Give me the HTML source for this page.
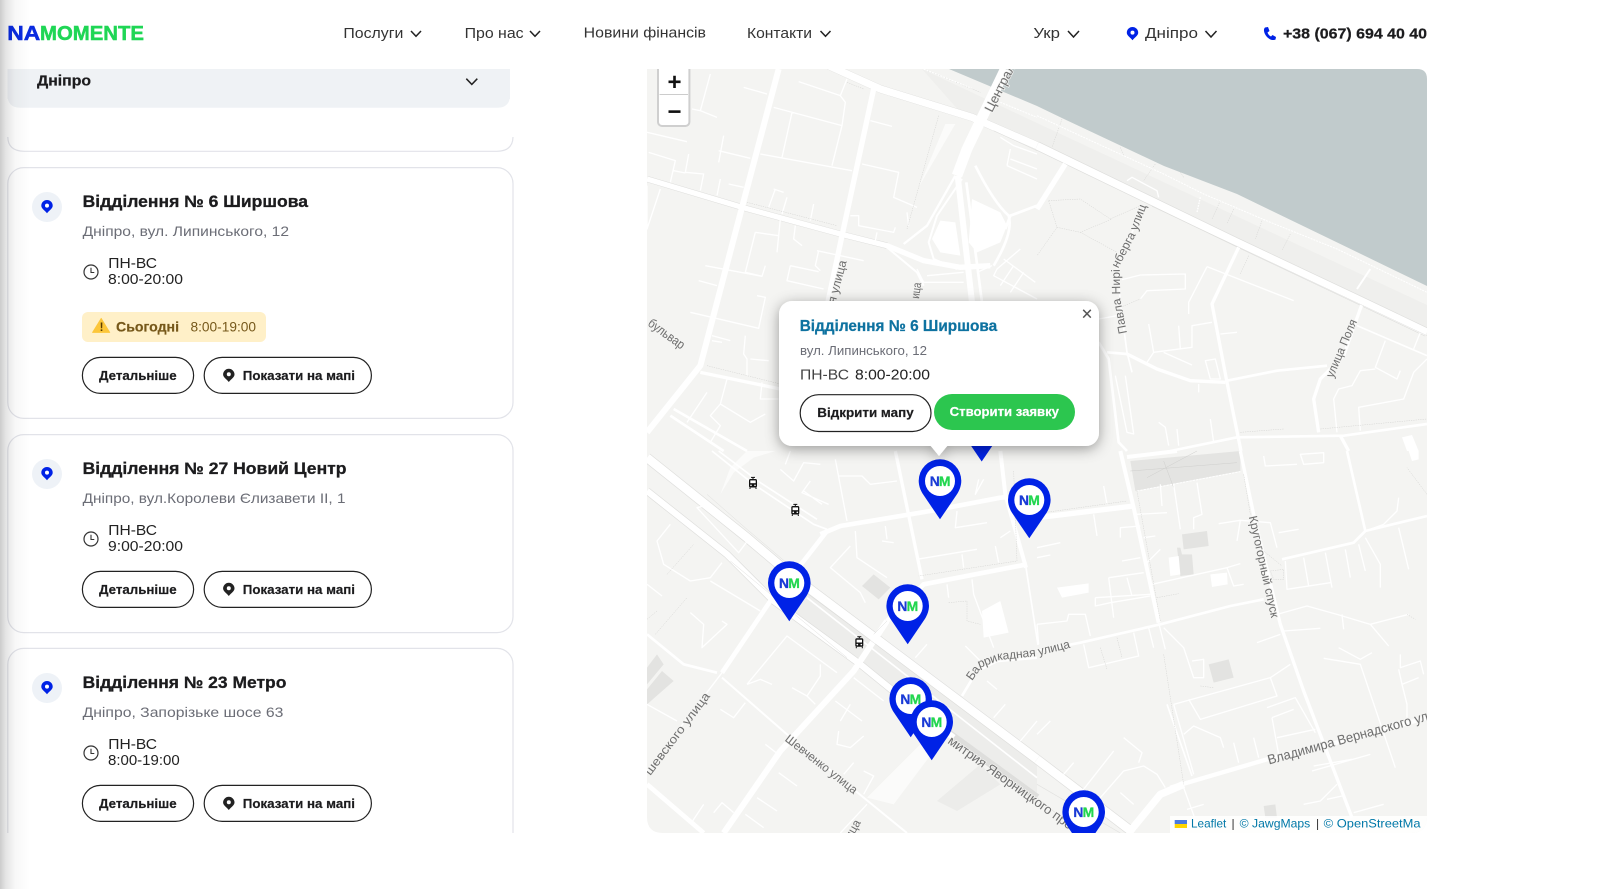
<!DOCTYPE html>
<html lang="uk"><head><meta charset="utf-8"><title>Namomente</title>
<style>
html,body{margin:0;padding:0;background:#fff;width:1610px;height:889px;overflow:hidden}
svg{display:block}
text{font-family:"Liberation Sans",sans-serif}
.r{fill:none;stroke:#fff;stroke-linejoin:round;stroke-linecap:butt}
.m{fill:none;stroke:#fff;stroke-width:4;stroke-linejoin:round}
.c{fill:none;stroke:#dededc;stroke-linejoin:round}
.d{fill:none;stroke:#d2d2d0;stroke-width:1.5;stroke-dasharray:4 3}
.g{fill:none;stroke:#dcdcda;stroke-width:2}
.l{font-size:12px;fill:#6e6e6e;stroke:#f4f4f2;stroke-width:1.5px;paint-order:stroke}
.n{font-size:15px;fill:#333}
.b{font-weight:bold;fill:#1c1c1e;stroke:#1c1c1e;stroke-width:.25px}
.h{font-size:16.5px;font-weight:bold;fill:#1c1c1e;stroke:#1c1c1e;stroke-width:.3px}
.a{font-size:14px;fill:#6b6d76}
.w{font-size:14.5px;fill:#222}
.k{font-size:13px;font-weight:bold;fill:#1c1c1e;stroke:#1c1c1e;stroke-width:.2px}
.at{font-size:12px;fill:#0078a8}
.nn{font-size:14px;font-weight:bold;fill:#1a3bd6;stroke:#1a3bd6;stroke-width:.3px}
.nm{font-size:14px;font-weight:bold;fill:#22d64f;stroke:#22d64f;stroke-width:.3px}
</style></head><body>
<svg xmlns="http://www.w3.org/2000/svg" width="1610" height="889" viewBox="0 0 1610 889">
<defs>
<clipPath id="mc"><path d="M647 69H1417Q1427 69 1427 79V817Q1427 833 1411 833H663Q647 833 647 817Z"/></clipPath>
<clipPath id="cc"><rect x="0" y="69" width="640" height="764"/></clipPath>
<clipPath id="ac"><rect x="1170" y="810" width="251" height="25"/></clipPath>
<filter id="ps" x="-20%" y="-20%" width="140%" height="150%"><feDropShadow dx="0" dy="3" stdDeviation="7" flood-color="#000" flood-opacity=".38"/></filter>
<linearGradient id="sh" x1="0" x2="1" y1="0" y2="0"><stop offset="0" stop-color="#000" stop-opacity=".2"/><stop offset=".2" stop-color="#000" stop-opacity=".1"/><stop offset=".5" stop-color="#000" stop-opacity=".03"/><stop offset="1" stop-color="#000" stop-opacity="0"/></linearGradient>
<path id="pin" d="M0 13.2C-2.5 10-5.7 8.5-5.7 5.7A5.7 5.7 0 0 1 5.7 5.7C5.7 8.5 2.5 10 0 13.2Z"/>
<path id="mk" d="M21.3 60L4 34.5C1.5 30.5 0 26 0 21.5A21.3 21.5 0 0 1 42.6 21.5C42.6 26 41 30.5 38.6 34.5Z"/>
<g id="tram"><rect x="-4" y="-4" width="8" height="8.5" rx="1.6" fill="#111"/><rect x="-2.7" y="-2.6" width="5.4" height="2.8" fill="#fff"/><circle cx="-2" cy="2.3" r=".8" fill="#fff"/><circle cx="2" cy="2.3" r=".8" fill="#fff"/><path d="M-2-5.6H2M0-5.6V-4M-3 4.5V6M3 4.5V6" stroke="#111" stroke-width="1" fill="none"/></g>
</defs>
<rect width="1610" height="889" fill="#fff"/>

<!-- MAP -->
<g clip-path="url(#mc)">
<rect x="647" y="69" width="780" height="764" fill="#f4f4f2"/>
<path d="M922 69L1037 123L1427 305V330L1037 150L960 112Z" fill="#efefed"/>
<polygon points="949,69 1037,106 1064,119 1164,166 1237,194 1330,239 1427,286 1427,69" fill="#c1cbcc"/>

<!-- TOP LEFT -->
<g transform="translate(647 69) scale(.33333)">
<path class="c" stroke-width="24" d="M545-10L700 60L975 145L1170 230"/>
<path class="c" stroke-width="19" d="M0 330L285 415L580 495L720 530"/>
<path class="r" stroke-width="22" d="M545-10L700 60L975 145L1170 230"/>
<path class="r" stroke-width="18" d="M395 0L285 415L160 890L0 1090"/>
<path class="r" stroke-width="16" d="M0 330L285 415L580 495L720 530L830 575L940 595L1030 590"/>
<path class="r" stroke-width="16" d="M680 60L585 500L530 760"/>
<path class="r" stroke-width="32" d="M1075 0L960 240L930 320"/>
<path class="r" stroke-width="18" d="M932 320L975 700"/>
<path class="r" stroke-width="8" d="M958 340L1005 700"/>
<path class="r" stroke-width="7" d="M925 320L840 470L770 525"/>
<path class="r" stroke-width="6" d="M945 330L870 440L845 520L860 570L930 600"/>
<path class="r" stroke-width="8" d="M985 290Q1040 400 1085 440Q1100 490 1040 590"/>
<path class="r" stroke-width="8" d="M1170 410L1090 440L1075 480"/>
<path class="r" stroke-width="6" d="M720 535L810 610L830 650"/>
<path fill="#fff" d="M975 390L1060 430L1080 470L1060 520L990 550L965 520ZM880 455L925 460L940 560L880 550L855 510Z"/>
<polygon fill="#fbfbfa" points="895,165 925,165 835,320 815,355"/>
<path class="r" stroke-width="10" d="M160 910L400 960"/>
<path class="r" stroke-width="8" d="M70 1040L230 1146M80 1020L300 1146"/>
<path class="m" d="M190 15L160 125L210 145M135 120L160 125M0 190L120 218M5 250L85 275L70 340M125 255L115 310L170 315L160 365M80 305L115 312M230 200L215 280M215 245L310 268M220 330L210 380M245 345L290 355M290 55L360 75M380 115L585 170L555 290M435 130L405 265M340 255L615 305M455 38L580 80L595 100L585 170M600 30L580 80M670 155L735 172M645 285L755 310L740 385L810 415M380 360L410 370M385 360L365 415M420 385L405 435M400 450L390 550M325 490L395 500M325 490L295 610L345 622L355 590M175 590L345 622M500 405L490 455M445 470L440 510L465 530M155 635L210 650M330 680L355 685L335 778L130 730M510 545L650 575M515 545L505 590L520 605M430 590L420 635L530 660M430 590L515 608M195 800L250 815M195 815L225 820M295 800L290 855L300 870L300 920M310 870L365 875M345 940L340 990L395 990M240 930L220 1005L190 1040L220 1070L190 1120M220 1005L310 1060L355 1035M180 970L120 1060M610 440L635 440L635 470L740 490L745 475M690 490L685 515M780 430L785 470M1060 205L1100 230L1170 255M1090 240L1080 290M1090 270L1170 300M1170 330L1080 290M1120 540L1050 600L1040 620L1170 690M1070 570L1165 640M1100 590L1060 650M1130 610L1090 670M840 620L950 610M810 600L830 640L950 640M990 610L1035 590M0 350L0 480L40 360"/>
<path class="d" d="M875 140L780 480M180 890L400 945M300 400L570 470M830 0L1000 70M600 40L650 60"/>
<path d="M1040 185L1170 245" stroke="#dededc" stroke-width="1.5" fill="none"/>
<path d="M830 0L975 58M1060 100L1170 145" stroke="#fff" stroke-width="3" stroke-dasharray="6 3" fill="none"/>
</g>

<!-- TOP RIGHT -->
<g transform="translate(1037 69) scale(.33333)">
<path class="c" stroke-width="27" d="M0 230L600 520L960 690L1170 790"/>
<path class="r" stroke-width="23" d="M0 230L600 520L960 690L1170 790"/>
<path class="r" stroke-width="16" d="M85 285L0 420"/>
<path class="r" stroke-width="10" d="M605 535L525 705L570 940L612 1146"/>
<path class="r" stroke-width="10" d="M975 705L920 860L850 930L830 990L845 1090"/>
<path class="r" stroke-width="5" d="M325 410L280 500L240 580L250 700L270 850L285 910"/>
<path class="r" stroke-width="10" d="M270 855L360 900L460 935L565 940"/>
<path class="r" stroke-width="8" d="M570 935L720 905L870 890"/>
<path class="r" stroke-width="8" d="M210 850L270 855"/>
<path class="r" stroke-width="8" d="M185 820L215 870L245 1120L270 1146"/>
<path class="r" stroke-width="8" d="M400 1146L600 1105L920 1100L1170 1065"/>
<path class="r" stroke-width="10" d="M910 1100L935 1146"/>
<path class="r" stroke-width="6" d="M1000 600L960 660"/>
<path class="r" stroke-width="5" d="M960 770L1170 860"/>
<path class="m" d="M255 632L310 618L445 615L445 660L330 665L310 690M510 593L455 700L455 735M510 593L770 695M550 795L600 790M525 760L465 770L465 835L350 850L330 880M335 765L350 850M425 770L430 840M380 850L465 888M505 875L520 930L550 930L535 870ZM1045 815L1015 895L1080 930L1090 905M1015 900L970 905L945 950L905 960L890 990L900 1090M1170 870L1130 910L1100 990L965 1015L970 1085M1150 790L1130 840M365 1060L385 1075L395 1130M420 1080L425 1130M520 1050L530 1120M485 945L485 970M270 335L285 325L360 365L365 385M235 920L270 1090L290 1095L265 920M185 750L240 740"/>
<polygon fill="#fff" points="1095,1105 1125,1098 1145,1146 1110,1146"/>
<path class="d" d="M75 150L45 235M355 285L320 335M550 395L525 450M590 420L570 465M675 455L655 510M760 495L735 545M635 560L610 615M35 395L130 390L220 450L310 410M60 475L0 560M60 475L130 490L225 450M130 490L240 550M35 395L60 475M250 715L310 690M250 235L260 260M430 310L440 325M610 1090L740 1080M850 1080L1170 1050"/>
<path d="M0 140L140 205L380 315L500 375L700 460L900 540L1170 670" stroke="#fff" stroke-width="3" stroke-dasharray="6 3" fill="none"/>
<path d="M490 385L480 430" stroke="#fff" stroke-width="4" stroke-dasharray="5 3" fill="none"/>
<path d="M345 412L1170 800" stroke="#dededc" stroke-width="1.5" fill="none"/>
</g>

<!-- BOTTOM LEFT -->
<g transform="translate(647 451) scale(.33333)">
<path d="M430 370L1170 925L1170 1040L380 450Z" fill="#ededeb"/>
<path fill="#e3e3e1" d="M645 405L680 370L730 410L695 445ZM0 650L30 610L50 640L0 700ZM0 715L45 660L80 690L0 760Z"/>
<path fill="#ececea" d="M870 1050L1000 940L1060 1000L930 1080Z"/>
<path fill="#fbfbfa" d="M220 130L260 65L320 20L385 0L300 0L250 50ZM660 1040L820 880L860 900L740 1060Z"/>
<path fill="#fff" d="M1005 480L1060 450L1085 545L1010 560Z"/>
<path class="c" stroke-width="30" d="M0 20L300 260L430 370L1170 925"/>
<path class="c" stroke-width="23" d="M0 120L240 310L380 450L640 640L800 770L1170 1040"/>
<path class="r" stroke-width="26" d="M0 20L300 260L430 370L1170 925"/>
<path class="r" stroke-width="19" d="M0 120L240 310L380 450L640 640L800 770L920 860"/>
<path class="r" stroke-width="5" d="M480 440L1170 980"/>
<path class="r" stroke-width="14" d="M540 240L470 330L370 450L225 665"/>
<path class="r" stroke-width="18" d="M720 510L660 600L620 660L400 900L230 1146"/>
<path class="r" stroke-width="14" d="M720 510L830 400L1140 340"/>
<path class="r" stroke-width="14" d="M520 250L580 225L850 180L1060 140L1170 130"/>
<path class="r" stroke-width="12" d="M1060 0L1075 130L1137 350"/>
<path class="r" stroke-width="5" d="M1137 350L1173 582"/>
<path class="r" stroke-width="10" d="M745 0L825 385"/>
<path class="r" stroke-width="8" d="M0 550L110 640L210 665"/>
<path class="r" stroke-width="14" d="M0 1000L170 1146"/>
<path class="r" stroke-width="6" d="M225 680L420 850L650 1040L780 1146"/>
<path class="r" stroke-width="8" d="M1170 620L1050 630L990 660L945 735"/>
<path class="r" stroke-width="5" d="M195 0L320 100L500 220L540 235M215 0L340 95L510 205"/>
<path class="m" d="M150 170L170 165L305 265L275 305ZM225 665L0 960M300 700L420 555L570 665M300 700L340 685L375 700M295 755L260 800L220 775M520 640L520 675L480 735L435 710M480 735L505 760M620 680L710 750M565 750L645 810M610 760L580 810M575 840L570 880L610 890L650 855M355 880L400 915M395 965L450 1005M620 935L590 970M650 960L680 975L650 1030M200 1085L225 1055L260 1085M170 1060L130 1120M330 1040L390 1080M295 1090L350 1130M70 220L30 270L50 340L130 390L190 380L225 335M190 390L340 480M130 485L170 520L165 590L240 520L225 510M610 285L550 350L640 425L655 455M625 240L630 320L720 380M715 225L720 265M705 270L740 275M565 25L600 210M575 75L645 75L670 100L750 90M400 55L440 90L470 35L520 40M430 0L415 40M490 90L465 125L545 160M470 120L525 160M930 180L925 230L1020 215M995 85L985 130L1010 85M810 325L990 295M945 310L950 350M1045 285L1055 335M1090 240L1060 260M900 400L905 440M975 385L980 430L1040 590M840 580L805 620M955 585L1000 630M1020 690L1050 715M1075 760L1040 800M1170 810L1120 870M0 400L45 435M660 1060L580 1146M0 760L90 810"/>
<path class="d" d="M905 455L960 450L960 510L1000 520M1100 60L1110 330L815 375M60 370L140 280M25 550L120 440M0 505L30 480"/>
<path d="M180 130L300 235L430 345M250 330L600 620M720 510L680 550M430 390L700 590" stroke="#dededc" stroke-width="1.5" fill="none"/>
</g>

<!-- BOTTOM RIGHT -->
<g transform="translate(1037 451) scale(.33333)">
<path fill="#e4e4e2" d="M280 30L610 0L610 60L295 120Z"/>
<path d="M300 120L610 62" stroke="#fff" stroke-width="3" stroke-dasharray="7 3" fill="none"/>
<path d="M330 80L480 0M380 30L410 110M280 60L600 35" stroke="#cfcfcd" stroke-width="1.5" fill="none"/>
<path fill="#e3e3e1" d="M435 250L510 240L515 285L440 295ZM420 290L430 290L435 310L465 310L470 370L430 375ZM515 640L575 625L590 680L530 695ZM680 1065L715 1060L720 1100L685 1100Z"/>
<path fill="#fff" d="M395 320L425 315L430 370L400 375ZM520 370L570 365L572 400L525 408ZM60 410L155 397L155 425L75 440ZM1115 0L1145 0L1145 25L1125 30Z"/>
<path class="c" stroke-width="30" d="M0 925L290 1146"/>
<path class="r" stroke-width="26" d="M0 925L290 1146"/>
<path class="r" stroke-width="22" d="M275 1146L370 1030L440 1000"/>
<path class="r" stroke-width="13" d="M400 1010L690 925L880 880L1170 800"/>
<path class="r" stroke-width="12" d="M270 18L420 0"/>
<path class="r" stroke-width="16" d="M0 200L290 165"/>
<path class="r" stroke-width="12" d="M250 0L290 170L365 515"/>
<path class="r" stroke-width="10" d="M610 0L650 190L730 520L800 720L945 1100"/>
<path class="r" stroke-width="8" d="M0 600L130 575L370 520L580 465L680 445"/>
<path class="r" stroke-width="8" d="M930 0L985 240"/>
<path class="r" stroke-width="8" d="M735 325L950 275L985 240L1170 195"/>
<path class="r" stroke-width="5" d="M390 760L465 975"/>
<path class="m" d="M365 515L385 595M335 530L350 590M300 190L390 185M250 260L250 230L310 225M320 260L355 255M255 330L310 320M330 335L370 295M345 400L570 350L610 338M570 350L590 405L620 400M215 380L320 365M215 380L230 500M270 380L285 435M175 440L340 430M175 440L175 465L220 455M220 455L340 435M0 520L90 510L95 490L145 490L160 555M140 580L155 650L305 615L290 545M410 760L700 680L720 735L490 805L455 745M380 530L440 590L470 680L500 680L500 625L465 630M700 680L760 640M690 770L775 740L835 845M705 800L770 775M705 800L725 910M720 860L835 835M590 875L605 935M650 860L665 920M440 850L470 825L550 860L560 890M410 760L470 970M440 1010L480 1120M450 1075L500 1060M660 575L730 550M740 540L850 532M545 218L610 208L600 270M610 208L700 215L720 290M725 245L785 235M720 490L810 465L900 490L1000 520L1115 490M1000 520L1055 585M915 490L920 535M905 590L970 625L1005 605M860 622L970 640L1075 950M1090 610L1090 650L1150 630L1160 670M1085 655L1095 700L1145 680M1095 700L1110 760L1110 800M825 960L1000 910M830 945L945 925M800 1060L850 1050L900 1000M950 1085L1040 1060M870 1045L915 1035M1085 140L1080 180L1040 220L985 240M745 330L750 415L880 395M800 320L815 405M865 305L885 410M925 295L940 380M965 280L985 360M985 260L1030 340L1030 410M1085 230L1115 355M0 850L40 810M80 970L110 935M120 1040L230 900M190 1040L260 960L320 945L360 970L385 1010M260 860L315 905L305 935M250 1025L290 1060M680 15L685 45L780 40M790 10L860 5L860 35L800 40ZM370 100L375 165M410 100L430 235M480 95L495 190L470 200L470 235M0 290L70 275M0 320L40 312M200 105L210 160M170 190L180 255M0 520L5 580"/>
<path class="d" d="M620 70L640 190M680 300L735 345M700 360L740 355L740 385L710 385ZM190 590L210 655M240 560L255 620M490 705L530 710M360 440L425 428M1110 490L1135 505M300 120L370 510M20 185L270 150M380 610L440 1000M1170 130L1110 50"/>
<path d="M0 1000L250 1146M0 1040L130 1146" stroke="#e2e2e0" stroke-width="2" fill="none"/>
</g>

<!-- TRAMS -->
<use href="#tram" transform="translate(753 483)"/>
<use href="#tram" transform="translate(795.3 510)"/>
<use href="#tram" transform="translate(859.3 642.3)"/>

<!-- MAP LABELS -->
<text class="l" transform="translate(992 113) rotate(-63)" style="font-size:13px">Центральная</text>
<text class="l" transform="translate(647 325) rotate(36)" style="font-size:13px" textLength="42" lengthAdjust="spacingAndGlyphs">бульвар</text>
<text class="l" transform="translate(835.3 304) rotate(-75)" textLength="44" lengthAdjust="spacingAndGlyphs">я улица</text>
<text class="l" transform="translate(919 299) rotate(-82)" textLength="16" lengthAdjust="spacingAndGlyphs">ица</text>
<path id="pp" d="M1127 333L1120.3 299L1119.7 265.7L1135.3 235.7L1146.3 206.3" fill="none"/>
<text class="l" letter-spacing=".15"><textPath href="#pp">Павла Нирінберга улица</textPath></text>
<text class="l" transform="translate(1333 378.5) rotate(-67)" textLength="62" lengthAdjust="spacingAndGlyphs">улица Поля</text>
<text class="l" transform="translate(1248.7 516.7) rotate(77.5)" textLength="104" lengthAdjust="spacingAndGlyphs">Кругогорный спуск</text>
<path id="pb" d="M972 681L982 667L1000 660L1037 656L1069 648" fill="none"/>
<text class="l" letter-spacing="-.1"><textPath href="#pb">Баррикадная улица</textPath></text>
<text class="l" transform="translate(1269 764.5) rotate(-15.5)" style="font-size:13.5px" textLength="166" lengthAdjust="spacingAndGlyphs">Владимира Вернадского ул</text>
<text class="l" transform="translate(784.3 740.3) rotate(38)" textLength="88" lengthAdjust="spacingAndGlyphs">Шевченко улица</text>
<text class="l" transform="translate(650.3 776) rotate(-53)" textLength="100" lengthAdjust="spacingAndGlyphs">шевского улица</text>
<text class="l" transform="translate(947 742.7) rotate(35.5)" style="font-size:13px" textLength="150" lengthAdjust="spacingAndGlyphs">митрия Яворницкого про</text>
<text class="l" transform="translate(851 840) rotate(-60)">ица</text>

<!-- MARKERS -->
<g transform="translate(960.4 401.5)"><use href="#mk" fill="#0022e6"/></g>
<g transform="translate(918.7 459.3)"><use href="#mk" fill="#0022e6"/><circle cx="21.3" cy="21.7" r="15" fill="#fff"/><text class="nn" x="11" y="26.7" textLength="10" lengthAdjust="spacingAndGlyphs">N</text><text class="nm" x="20.2" y="26.7" textLength="11.6" lengthAdjust="spacingAndGlyphs">M</text></g>
<g transform="translate(1008 478.3)"><use href="#mk" fill="#0022e6"/><circle cx="21.3" cy="21.7" r="15" fill="#fff"/><text class="nn" x="11" y="26.7" textLength="10" lengthAdjust="spacingAndGlyphs">N</text><text class="nm" x="20.2" y="26.7" textLength="11.6" lengthAdjust="spacingAndGlyphs">M</text></g>
<g transform="translate(768 561.3)"><use href="#mk" fill="#0022e6"/><circle cx="21.3" cy="21.7" r="15" fill="#fff"/><text class="nn" x="11" y="26.7" textLength="10" lengthAdjust="spacingAndGlyphs">N</text><text class="nm" x="20.2" y="26.7" textLength="11.6" lengthAdjust="spacingAndGlyphs">M</text></g>
<g transform="translate(886.4 584.3)"><use href="#mk" fill="#0022e6"/><circle cx="21.3" cy="21.7" r="15" fill="#fff"/><text class="nn" x="11" y="26.7" textLength="10" lengthAdjust="spacingAndGlyphs">N</text><text class="nm" x="20.2" y="26.7" textLength="11.6" lengthAdjust="spacingAndGlyphs">M</text></g>
<g transform="translate(889.4 677.3)"><use href="#mk" fill="#0022e6"/><circle cx="21.3" cy="21.7" r="15" fill="#fff"/><text class="nn" x="11" y="26.7" textLength="10" lengthAdjust="spacingAndGlyphs">N</text><text class="nm" x="20.2" y="26.7" textLength="11.6" lengthAdjust="spacingAndGlyphs">M</text></g>
<g transform="translate(910.4 700.3)"><use href="#mk" fill="#0022e6"/><circle cx="21.3" cy="21.7" r="15" fill="#fff"/><text class="nn" x="11" y="26.7" textLength="10" lengthAdjust="spacingAndGlyphs">N</text><text class="nm" x="20.2" y="26.7" textLength="11.6" lengthAdjust="spacingAndGlyphs">M</text></g>
<g transform="translate(1062.4 790.3)"><use href="#mk" fill="#0022e6"/><circle cx="21.3" cy="21.7" r="15" fill="#fff"/><text class="nn" x="11" y="26.7" textLength="10" lengthAdjust="spacingAndGlyphs">N</text><text class="nm" x="20.2" y="26.7" textLength="11.6" lengthAdjust="spacingAndGlyphs">M</text></g>

<!-- POPUP -->
<g filter="url(#ps)"><rect x="779" y="301" width="320" height="145" rx="13" fill="#fff"/><polygon points="930,445 948,445 939,456" fill="#fff"/></g>
<text x="799.7" y="331" font-size="15.5" font-weight="bold" fill="#0e72a0" stroke="#0e72a0" stroke-width=".25" textLength="197.5" lengthAdjust="spacingAndGlyphs">Відділення № 6 Ширшова</text>
<text x="800" y="355" font-size="13" fill="#6b6d76" textLength="127" lengthAdjust="spacingAndGlyphs">вул. Липинського, 12</text>
<text x="800" y="379.5" font-size="15" fill="#444" textLength="49" lengthAdjust="spacingAndGlyphs">ПН-ВС</text>
<text x="855" y="379.5" font-size="15" fill="#222" textLength="75" lengthAdjust="spacingAndGlyphs">8:00-20:00</text>
<rect x="800.2" y="394.7" width="130.8" height="36.8" rx="18.4" fill="#fff" stroke="#222" stroke-width="1.2"/>
<text x="817.3" y="417" class="k" textLength="96.4" lengthAdjust="spacingAndGlyphs">Відкрити мапу</text>
<rect x="934" y="394" width="141" height="36" rx="18" fill="#2cc64f"/>
<text x="949.7" y="416" font-size="13" font-weight="bold" fill="#fff" stroke="#fff" stroke-width=".2" textLength="109.3" lengthAdjust="spacingAndGlyphs">Створити заявку</text>
<path d="M1083.2 309.8L1090.8 317.6M1090.8 309.8L1083.2 317.6" stroke="#555" stroke-width="1.5" fill="none"/>

<!-- ZOOM -->
<rect x="658" y="60" width="31.4" height="66" rx="4" fill="#fff" stroke="#cfcfcf" stroke-width="2"/>
<rect x="659.5" y="94" width="28.5" height="1" fill="#ccc"/>
<text x="667.5" y="90" font-size="24" font-weight="bold" fill="#111">+</text>
<text x="667.5" y="119.5" font-size="24" font-weight="bold" fill="#111">−</text>

<!-- ATTRIBUTION -->
<rect x="1170" y="816" width="257" height="17" fill="#fff" fill-opacity=".85"/>
<rect x="1174.7" y="820" width="12.3" height="4" fill="#4c7be1"/><rect x="1174.7" y="824" width="12.3" height="4" fill="#ffd500"/>
<text class="at" x="1191" y="827.7" textLength="35.3" lengthAdjust="spacingAndGlyphs">Leaflet</text>
<text x="1231.5" y="827.7" font-size="12" fill="#333">|</text>
<text class="at" x="1239.7" y="827.7" textLength="70.6" lengthAdjust="spacingAndGlyphs">© JawgMaps</text>
<text x="1316" y="827.7" font-size="12" fill="#333">|</text>
<g clip-path="url(#ac)"><text class="at" x="1323.7" y="827.7" textLength="104" lengthAdjust="spacingAndGlyphs">© OpenStreetMap</text></g>
</g>

<!-- LEFT PANEL -->
<g clip-path="url(#cc)">
<path d="M7.5 100V95H510V95Q510 107.7 497 107.7H20Q7.5 107.7 7.5 95Z" fill="#eff2f5"/>
<rect x="7.5" y="69" width="502.5" height="30" fill="#eff2f5"/>
<text x="37" y="85.5" font-size="15" class="b" textLength="54" lengthAdjust="spacingAndGlyphs">Дніпро</text>
<path d="M466.3 78.7L471.8 84.4L477.3 78.7" fill="none" stroke="#222" stroke-width="1.5"/>

<path d="M7.8 137Q8 151 24 151.3H497Q512.8 151 513 137" fill="#fff" stroke="#e2e3e9" stroke-width="1.2"/>

<!-- Card 1 -->
<rect x="7.8" y="167.6" width="505.2" height="250.8" rx="16" fill="#fff" stroke="#e2e3e9" stroke-width="1.2"/>
<ellipse cx="47" cy="207" rx="15" ry="15" fill="#eef2f7"/>
<use href="#pin" transform="translate(47 200)" fill="#0022e6"/><circle cx="47" cy="205.6" r="2" fill="#fff"/>
<text x="82.6" y="207" class="h" textLength="225.4" lengthAdjust="spacingAndGlyphs">Відділення № 6 Ширшова</text>
<text x="82.6" y="236" class="a" textLength="206.4" lengthAdjust="spacingAndGlyphs">Дніпро, вул. Липинського, 12</text>
<circle cx="91" cy="272" r="7" fill="none" stroke="#333" stroke-width="1.2"/><path d="M91 267.8V272.5H94.3" fill="none" stroke="#333" stroke-width="1.1"/>
<text x="108.3" y="268" class="w" textLength="48.7" lengthAdjust="spacingAndGlyphs">ПН-ВС</text>
<text x="108" y="284" class="w" textLength="75" lengthAdjust="spacingAndGlyphs">8:00-20:00</text>
<rect x="82" y="312" width="184" height="30" rx="6" fill="#fff0c8"/>
<path d="M101.2 318.3L109.8 332.5H92.5Z" fill="#fcc63a" stroke="#fcc63a" stroke-width=".8" stroke-linejoin="round"/>
<text x="99.6" y="331" font-size="11.5" font-weight="bold" fill="#5a3d00">!</text>
<text x="116" y="331.5" font-size="14" font-weight="bold" fill="#76581a" stroke="#76581a" stroke-width=".2" textLength="63" lengthAdjust="spacingAndGlyphs">Сьогодні</text>
<text x="190.5" y="331.5" font-size="14" fill="#76581a" textLength="65.5" lengthAdjust="spacingAndGlyphs">8:00-19:00</text>
<rect x="82.4" y="357.4" width="111.2" height="36" rx="18" fill="#fff" stroke="#222" stroke-width="1.2"/>
<text x="99" y="380" class="k" textLength="77.6" lengthAdjust="spacingAndGlyphs">Детальніше</text>
<rect x="204.2" y="357.4" width="167.2" height="36" rx="18" fill="#fff" stroke="#222" stroke-width="1.2"/>
<use href="#pin" transform="translate(228.8 368.8)" fill="#222"/><circle cx="228.8" cy="374.3" r="2" fill="#fff"/>
<text x="242.8" y="380" class="k" textLength="112.2" lengthAdjust="spacingAndGlyphs">Показати на мапі</text>

<!-- Card 2 -->
<rect x="7.8" y="434.6" width="505.2" height="198" rx="16" fill="#fff" stroke="#e2e3e9" stroke-width="1.2"/>
<ellipse cx="47" cy="474" rx="15" ry="15" fill="#eef2f7"/>
<use href="#pin" transform="translate(47 467)" fill="#0022e6"/><circle cx="47" cy="472.6" r="2" fill="#fff"/>
<text x="82.6" y="474" class="h" textLength="263.9" lengthAdjust="spacingAndGlyphs">Відділення № 27 Новий Центр</text>
<text x="82.6" y="503" class="a" textLength="262.9" lengthAdjust="spacingAndGlyphs">Дніпро, вул.Королеви Єлизавети II, 1</text>
<circle cx="91" cy="539" r="7" fill="none" stroke="#333" stroke-width="1.2"/><path d="M91 534.8V539.5H94.3" fill="none" stroke="#333" stroke-width="1.1"/>
<text x="108.3" y="535" class="w" textLength="48.7" lengthAdjust="spacingAndGlyphs">ПН-ВС</text>
<text x="108" y="551" class="w" textLength="75" lengthAdjust="spacingAndGlyphs">9:00-20:00</text>
<rect x="82.4" y="571.4" width="111.2" height="36" rx="18" fill="#fff" stroke="#222" stroke-width="1.2"/>
<text x="99" y="594" class="k" textLength="77.6" lengthAdjust="spacingAndGlyphs">Детальніше</text>
<rect x="204.2" y="571.4" width="167.2" height="36" rx="18" fill="#fff" stroke="#222" stroke-width="1.2"/>
<use href="#pin" transform="translate(228.8 582.8)" fill="#222"/><circle cx="228.8" cy="588.3" r="2" fill="#fff"/>
<text x="242.8" y="594" class="k" textLength="112.2" lengthAdjust="spacingAndGlyphs">Показати на мапі</text>

<!-- Card 3 -->
<rect x="7.8" y="648.4" width="505.2" height="240" rx="16" fill="#fff" stroke="#e2e3e9" stroke-width="1.2"/>
<ellipse cx="47" cy="688" rx="15" ry="15" fill="#eef2f7"/>
<use href="#pin" transform="translate(47 681)" fill="#0022e6"/><circle cx="47" cy="686.6" r="2" fill="#fff"/>
<text x="82.6" y="688" class="h" textLength="203.8" lengthAdjust="spacingAndGlyphs">Відділення № 23 Метро</text>
<text x="82.6" y="717" class="a" textLength="200.8" lengthAdjust="spacingAndGlyphs">Дніпро, Запорізьке шосе 63</text>
<circle cx="91" cy="753" r="7" fill="none" stroke="#333" stroke-width="1.2"/><path d="M91 748.8V753.5H94.3" fill="none" stroke="#333" stroke-width="1.1"/>
<text x="108.3" y="749" class="w" textLength="48.7" lengthAdjust="spacingAndGlyphs">ПН-ВС</text>
<text x="108" y="765" class="w" textLength="71.7" lengthAdjust="spacingAndGlyphs">8:00-19:00</text>
<rect x="82.4" y="785.4" width="111.2" height="36" rx="18" fill="#fff" stroke="#222" stroke-width="1.2"/>
<text x="99" y="808" class="k" textLength="77.6" lengthAdjust="spacingAndGlyphs">Детальніше</text>
<rect x="204.2" y="785.4" width="167.2" height="36" rx="18" fill="#fff" stroke="#222" stroke-width="1.2"/>
<use href="#pin" transform="translate(228.8 796.8)" fill="#222"/><circle cx="228.8" cy="802.3" r="2" fill="#fff"/>
<text x="242.8" y="808" class="k" textLength="112.2" lengthAdjust="spacingAndGlyphs">Показати на мапі</text>
</g>

<!-- HEADER -->
<text x="7.3" y="40" font-size="20.5" font-weight="bold" fill="#0a2be0" textLength="33" lengthAdjust="spacingAndGlyphs" stroke="#0a2be0" stroke-width=".5">NA</text>
<text x="40" y="40" font-size="20.5" font-weight="bold" fill="#1fd655" textLength="104" lengthAdjust="spacingAndGlyphs" stroke="#1fd655" stroke-width=".5">MOMENTE</text>
<text x="343.4" y="38" class="n" textLength="60" lengthAdjust="spacingAndGlyphs">Послуги</text>
<path d="M411 31L416 36.3L421 31" fill="none" stroke="#222" stroke-width="1.5"/>
<text x="464.6" y="38" class="n" textLength="59" lengthAdjust="spacingAndGlyphs">Про нас</text>
<path d="M530 31L535 36.3L540 31" fill="none" stroke="#222" stroke-width="1.5"/>
<text x="583.7" y="37.5" class="n" textLength="122.3" lengthAdjust="spacingAndGlyphs">Новини фінансів</text>
<text x="747" y="38" class="n" textLength="65" lengthAdjust="spacingAndGlyphs">Контакти</text>
<path d="M820.5 31L825.5 36.3L830.5 31" fill="none" stroke="#222" stroke-width="1.5"/>
<text x="1033.4" y="38" class="n" textLength="26.6" lengthAdjust="spacingAndGlyphs">Укр</text>
<path d="M1068 31L1073.5 37L1079 31" fill="none" stroke="#222" stroke-width="1.5"/>
<use href="#pin" transform="translate(1132.5 27)" fill="#0022e6"/><circle cx="1132.5" cy="32.6" r="2" fill="#fff"/>
<text x="1145" y="38" class="n" textLength="53" lengthAdjust="spacingAndGlyphs">Дніпро</text>
<path d="M1205.5 31L1211 37L1216.5 31" fill="none" stroke="#222" stroke-width="1.5"/>
<path d="M1265 27.5l3-.5 1.5 4-2 1.5c.7 2 2 3.3 3.5 4l1.5-1.5 3.5 2-.5 2.5c-1 .7-3 .7-4.5.2-3.5-1.3-6.5-5-7-8.7-.2-1.5.3-3 1-3.5z" fill="#0022e6"/>
<text x="1283" y="38.5" font-size="15" class="b" textLength="144" lengthAdjust="spacingAndGlyphs">+38 (067) 694 40 40</text>

<!-- left edge shadow -->
<rect x="0" y="0" width="30" height="889" fill="url(#sh)"/>
</svg>
</body></html>
